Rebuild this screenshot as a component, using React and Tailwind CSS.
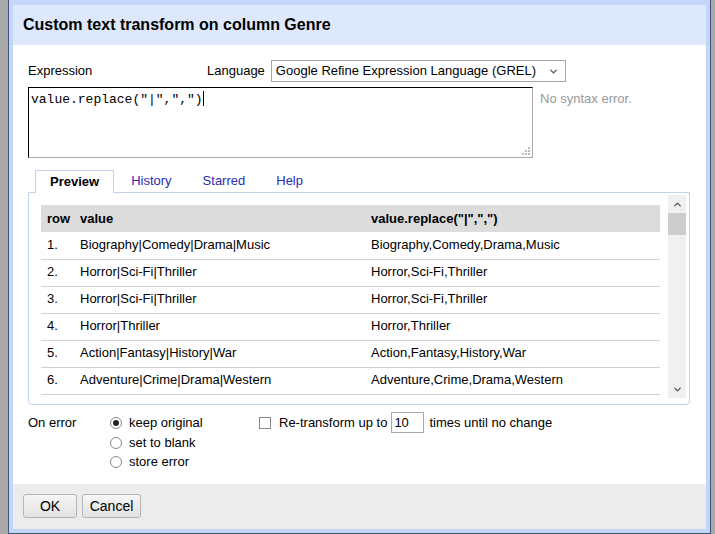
import React from 'react';
import { ChevronDown, ChevronUp } from 'lucide-react';

const rows = [
   ['1.', 'Biography|Comedy|Drama|Music', 'Biography,Comedy,Drama,Music'],
   ['2.', 'Horror|Sci-Fi|Thriller', 'Horror,Sci-Fi,Thriller'],
   ['3.', 'Horror|Sci-Fi|Thriller', 'Horror,Sci-Fi,Thriller'],
   ['4.', 'Horror|Thriller', 'Horror,Thriller'],
   ['5.', 'Action|Fantasy|History|War', 'Action,Fantasy,History,War'],
   ['6.', 'Adventure|Crime|Drama|Western', 'Adventure,Crime,Drama,Western'],
];

const Radio = ({ checked, label, h }) => (
   <div className={`flex items-center ${h}`}>
      <span className="w-[12px] h-[12px] rounded-full border border-[#888] bg-white flex items-center justify-center">
         {checked && <span className="w-[6px] h-[6px] rounded-full bg-[#222]" />}
      </span>
      <span className="ml-[7px]">{label}</span>
   </div>
);

const Tab = ({ label, active }) => (
   <div
      className={
         active
            ? 'h-[23px] px-[14px] flex items-center font-bold border border-b-0 border-[#c3d0f0] bg-white -mb-px relative'
            : 'h-[22px] px-[14px] flex items-center text-[#2b2bb0]'
      }
   >
      {label}
   </div>
);

const App = () => {
   return (
      <div
         className="w-[715px] h-[534px] bg-[#a9a9a9] pl-[8px] pr-[4px] overflow-hidden text-[13px] text-black"
         style={{ fontFamily: '"Liberation Sans", Arial, sans-serif' }}
      >
         {/* dialog frame */}
         <div className="h-full border border-t-0 border-[#40547a] bg-[#c3d6f8] pt-[5px] px-[4px] pb-[4px]">
            <div className="h-full flex flex-col bg-white">
               {/* Header */}
               <div className="h-[40px] bg-[#dde8fc] flex items-center pl-[10px]">
                  <h1 className="text-[16px] font-bold">Custom text transform on column Genre</h1>
               </div>

               {/* Body */}
               <div className="flex-1 px-[15px] pt-[15px]">
                  <div className="flex items-center h-[22px]">
                     <span className="w-[179px]">Expression</span>
                     <span>Language</span>
                     <div className="ml-[6px] w-[295px] h-[22px] border border-[#a6a6a6] flex items-center justify-between pl-[4px] pr-[6px]">
                        <span>Google Refine Expression Language (GREL)</span>
                        <ChevronDown size={11} strokeWidth={3} className="text-[#555]" />
                     </div>
                  </div>

                  <div className="flex mt-[5px]">
                     <div className="relative w-[505px] h-[71px] border border-[#aaa] border-t-black border-l-black pl-[2px] pt-[1px]">
                        <span className="text-[13px]" style={{ fontFamily: '"Liberation Mono", "Courier New", monospace' }}>
                           value.replace("|",",")
                        </span>
                        <span className="inline-block w-px h-[15px] bg-black align-[-3px]" />
                        <svg className="absolute right-[1px] bottom-[1px]" width="10" height="10" viewBox="0 0 10 10">
                           <rect x="7" y="1" width="2" height="2" fill="#bbb" />
                           <rect x="4" y="4" width="2" height="2" fill="#bbb" />
                           <rect x="7" y="4" width="2" height="2" fill="#bbb" />
                           <rect x="1" y="7" width="2" height="2" fill="#bbb" />
                           <rect x="4" y="7" width="2" height="2" fill="#bbb" />
                           <rect x="7" y="7" width="2" height="2" fill="#bbb" />
                        </svg>
                     </div>
                     <span className="ml-[7px] mt-[2px] text-[#999]">No syntax error.</span>
                  </div>

                  {/* Tabs */}
                  <div className="mt-[12px] w-[662px]">
                     <div className="flex gap-[3px] pl-[7px]">
                        <Tab label="Preview" active />
                        <Tab label="History" />
                        <Tab label="Starred" />
                        <Tab label="Help" />
                     </div>
                     <div className="h-[213px] border border-[#c3d0f0] rounded-b-[4px] pt-[2px] pl-[2px]">
                        <div className="flex h-[203px]">
                           <div className="flex-1 overflow-hidden pl-[10px] pt-[10px] pr-[8px]">
                              <table className="w-[619px] border-collapse">
                                 <thead>
                                    <tr className="h-[27px] bg-[#dcdcdc] font-bold text-left">
                                       <th className="w-[33px] pl-[6px] font-bold">row</th>
                                       <th className="w-[291px] pl-[6px] font-bold">value</th>
                                       <th className="pl-[6px] font-bold">value.replace("|",",")</th>
                                    </tr>
                                 </thead>
                                 <tbody>
                                    {rows.map((r) => (
                                       <tr key={r[0]} className="h-[27px] border-b border-[#d0d0d0]">
                                          <td className="pl-[6px] pb-px">{r[0]}</td>
                                          <td className="pl-[6px] pb-px">{r[1]}</td>
                                          <td className="pl-[6px] pb-px">{r[2]}</td>
                                       </tr>
                                    ))}
                                 </tbody>
                              </table>
                           </div>
                           {/* scrollbar */}
                           <div className="w-[18px] bg-[#f0f0f0] flex flex-col mr-[3px]">
                              <div className="h-[18px] flex items-center justify-center">
                                 <ChevronUp size={11} strokeWidth={3} className="text-[#555]" />
                              </div>
                              <div className="h-[22px] bg-[#cdcdcd]" />
                              <div className="flex-1" />
                              <div className="h-[18px] flex items-center justify-center">
                                 <ChevronDown size={11} strokeWidth={3} className="text-[#555]" />
                              </div>
                           </div>
                        </div>
                     </div>
                  </div>

                  {/* On error options */}
                  <div className="flex mt-[7px]">
                     <div className="w-[82px] h-[21px] flex items-center">On error</div>
                     <div className="w-[149px]">
                        <Radio checked label="keep original" h="h-[21px]" />
                        <Radio label="set to blank" h="h-[19px]" />
                        <Radio label="store error" h="h-[20px]" />
                     </div>
                     <div className="flex items-center h-[21px]">
                        <span className="w-[12px] h-[12px] border border-[#888] bg-white" />
                        <span className="ml-[8px]">Re-transform up to</span>
                        <div className="ml-[4px] w-[33px] h-[21px] border border-[#aaa] flex items-center pl-[2px]">10</div>
                        <span className="ml-[5px]">times until no change</span>
                     </div>
                  </div>
               </div>

               {/* Footer */}
               <div className="h-[45px] bg-[#ececec] flex items-start pt-[10px] pl-[10px] gap-[5px]">
                  <button className="w-[54px] h-[24px] border border-[#b4b4b4] rounded-[3px] bg-gradient-to-b from-[#f6f6f6] to-[#e2e2e2] text-[14px]">
                     OK
                  </button>
                  <button className="w-[59px] h-[24px] border border-[#b4b4b4] rounded-[3px] bg-gradient-to-b from-[#f6f6f6] to-[#e2e2e2] text-[14px]">
                     Cancel
                  </button>
               </div>
            </div>
         </div>
      </div>
   );
};

export default App;
